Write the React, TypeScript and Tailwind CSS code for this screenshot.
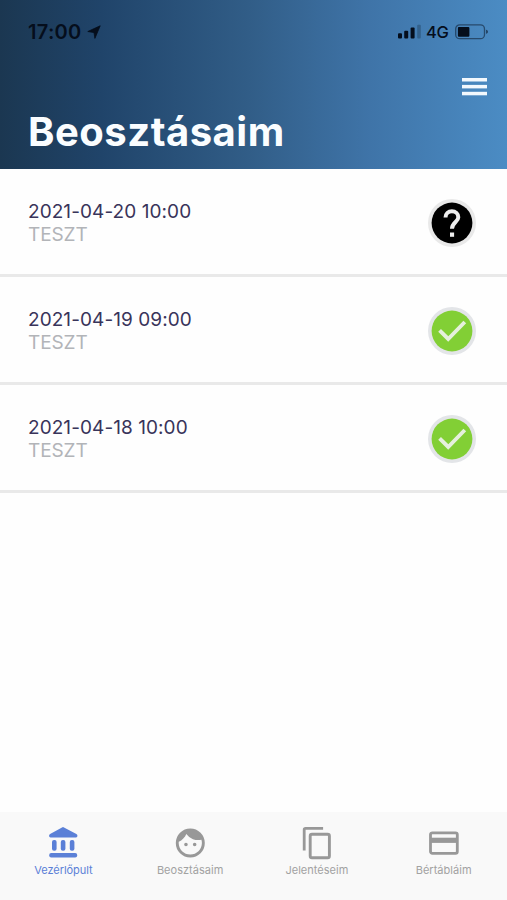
import type { ReactNode } from 'react';

type Shift = { time: string; place: string; status: 'pending' | 'accepted' };

const shifts: Shift[] = [
  { time: '2021-04-20 10:00', place: 'TESZT', status: 'pending' },
  { time: '2021-04-19 09:00', place: 'TESZT', status: 'accepted' },
  { time: '2021-04-18 10:00', place: 'TESZT', status: 'accepted' },
];

function StatusBar() {
  return (
    <div className="flex h-[22px] items-center justify-between pl-7 pr-[18px] text-[#050e1c]">
      <div className="flex items-center gap-[5px]">
        <span className="text-[20px] font-semibold leading-[22px] tracking-[0.3px]">17:00</span>
        <svg className="h-[15px] w-[15px]" viewBox="0 0 15 15">
          <path d="M13.2 0.8 7.9 13.4 7 7.6 0.8 6.5Z" fill="currentColor" stroke="currentColor" strokeWidth="0.8" strokeLinejoin="round" />
        </svg>
      </div>
      <div className="flex items-center">
        <svg className="h-4 w-6" viewBox="0 0 24 16" fill="currentColor">
          <rect x="0" y="9.3" width="4" height="5.2" rx="1" />
          <rect x="6.2" y="6.8" width="4" height="7.7" rx="1" />
          <rect x="12.6" y="3.6" width="4" height="10.9" rx="1" />
          <rect x="19.2" y="0.8" width="3.6" height="13.7" rx="1" opacity="0.25" />
        </svg>
        <span className="ml-[4px] w-[23px] text-[16.5px] font-medium leading-[22px] tracking-[-0.4px]">4G</span>
        <svg className="ml-[6px] h-4 w-[34px]" viewBox="0 0 34 16">
          <rect x="0.7" y="0.9" width="28.8" height="13.8" rx="4" fill="none" stroke="currentColor" strokeWidth="1.3" opacity="0.5" />
          <rect x="2.9" y="2.9" width="11.5" height="9.8" rx="1" fill="currentColor" />
          <path d="M31 5.8c1.3.3 2 1 2 2s-.7 1.7-2 2Z" fill="currentColor" opacity="0.55" />
        </svg>
      </div>
    </div>
  );
}

function StatusBadge({ status }: { status: Shift['status'] }) {
  const pending = status === 'pending';
  return (
    <svg className="h-12 w-12 shrink-0" viewBox="0 0 48 48">
      <circle cx="24" cy="24" r="24" fill={pending ? '#e9e9e9' : '#e3e5e8'} />
      <circle cx="24" cy="24" r="20.4" fill={pending ? '#000' : '#82cf35'} />
      {pending ? (
        <g>
          <path d="M17.5 18.5c0-3.9 2.9-6.3 6.4-6.3s6.4 2.6 6.4 6c0 4.7-6.3 5.1-6.3 11.6" fill="none" stroke="#eee" strokeWidth="4" />
          <rect x="22" y="33.5" width="4.1" height="4.3" fill="#eee" />
        </g>
      ) : (
        <path d="m11.6 23.4 8.6 8.6L36.8 15" fill="none" stroke="#e5f0dc" strokeWidth="3.9" />
      )}
    </svg>
  );
}

function ShiftRow({ shift }: { shift: Shift }) {
  return (
    <li className="flex h-[108px] items-center justify-between border-b-[3px] border-[#e9e9e9] pl-7 pr-[31px] pt-[2px]">
      <div className="text-[19px] leading-[23px]">
        <p className="tracking-[0.07px] text-[#39345a]">{shift.time}</p>
        <p className="tracking-[-0.1px] text-[#b2b4b8]">{shift.place}</p>
      </div>
      <StatusBadge status={shift.status} />
    </li>
  );
}

function Tab({ label, active, children }: { label: string; active?: boolean; children: ReactNode }) {
  return (
    <div className={`flex flex-1 flex-col items-center pt-[13px] ${active ? 'text-[#5b80d7]' : 'text-[#989898]'}`}>
      <svg className="h-9 w-9" viewBox="0 0 36 36" fill="currentColor">
        {children}
      </svg>
      <span className={`mt-[2px] text-[11px] leading-[14px] ${active ? 'tracking-[-0.05px]' : 'tracking-[0.02px] text-[#a2a2a2]'}`}>{label}</span>
    </div>
  );
}

export default function App() {
  return (
    <div className="flex h-[900px] w-full flex-col bg-[#fefefe] font-['Inter',sans-serif]">
      <header className="flex h-[169px] flex-col bg-[linear-gradient(90deg,#1b3751_0%,#20446a_20%,#315d87_49%,#3f74a8_73%,#4b8cc4_100%)] pt-[21px]">
        <StatusBar />
        <div className="flex justify-end pr-5 pt-[35px]">
          <svg className="h-[18px] w-[25px]" viewBox="0 0 25 18" fill="#f2f8fd">
            <rect y="0" width="25" height="3.5" />
            <rect y="6.9" width="25" height="3.5" />
            <rect y="13.8" width="25" height="3.5" />
          </svg>
        </div>
        <h1 className="mt-[12px] pl-7 text-[40px] font-bold leading-[48px] tracking-[0.5px] text-[#fafdff]">Beosztásaim</h1>
      </header>
      <ul className="flex-1">
        {shifts.map((shift) => (
          <ShiftRow key={shift.time} shift={shift} />
        ))}
      </ul>
      <nav className="flex h-[88px] bg-[#f9f9f9]">
        <Tab label="Vezérlőpult" active>
          <path d="M17 2.4q1-.6 2 0l12.4 6.6q1 .5 1 1.5v.5q0 1.4-1.4 1.4H5.5q-1.4 0-1.4-1.4v-.5q0-1 1-1.5Z" />
          <rect x="7" y="15" width="4.6" height="10.8" rx="2" />
          <rect x="15.8" y="15" width="4.6" height="10.8" rx="2" />
          <rect x="24.8" y="15" width="4.6" height="10.8" rx="2" />
          <rect x="4.2" y="28" width="28" height="4.6" rx="2" />
        </Tab>
        <Tab label="Beosztásaim">
          <g transform="translate(.9 .6) scale(1.45)">
            <path d="M9 11.75a1.25 1.25 0 1 0 0 2.5 1.25 1.25 0 0 0 0-2.5Zm6 0a1.25 1.25 0 1 0 0 2.5 1.25 1.25 0 0 0 0-2.5ZM12 2a10 10 0 1 0 0 20 10 10 0 0 0 0-20Zm0 18c-4.41 0-8-3.59-8-8 0-.29.02-.58.05-.86 2.36-1.05 4.23-2.98 5.21-5.37a9.97 9.97 0 0 0 10.41 3.97c.21.71.33 1.47.33 2.26 0 4.41-3.59 8-8 8Z" />
          </g>
        </Tab>
        <Tab label="Jelentéseim">
          <path d="M5.2 25.4V4.8q0-1.4 1.4-1.4h17.5" fill="none" stroke="currentColor" strokeWidth="2.8" />
          <rect x="11.2" y="9.3" width="19.2" height="23.4" rx="1.8" fill="none" stroke="currentColor" strokeWidth="2.9" />
        </Tab>
        <Tab label="Bértábláim">
          <rect x="4.5" y="7.8" width="26.8" height="20.6" rx="1.8" fill="none" stroke="currentColor" strokeWidth="2.8" />
          <rect x="4.6" y="12.7" width="26.4" height="5.2" />
        </Tab>
      </nav>
    </div>
  );
}
